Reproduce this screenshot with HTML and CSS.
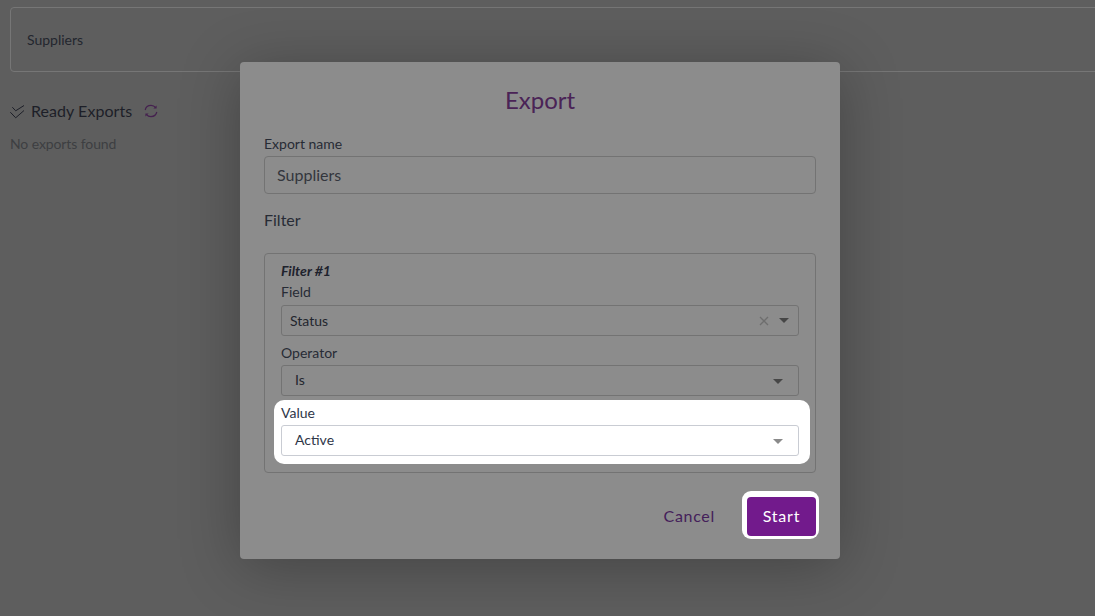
FILE: index.html
```html
<!DOCTYPE html>
<html lang="en">
<head>
<meta charset="utf-8">
<title>Export</title>
<link rel="stylesheet" href="styles.css">
</head>
<body>
<main class="page">
  <section class="entity-card">Suppliers</section>
  <h2 class="ready-title">
    <svg class="check-icon" width="16" height="14" viewBox="0 0 16 14" fill="none"><path d="M2.300 2.200 5.700 5.800 14 .5M.3 7.200 5.700 12.800 14 5.500" stroke="#1d1f28" stroke-width="1"/></svg>
    <span>Ready Exports</span>
    <svg class="refresh-icon" width="14" height="14" viewBox="0 0 14 14" fill="none"><path d="M1.200 6C1.800 3.200 4.100 1.400 7 1.400c1.900 0 3.600.9 4.700 2.300M12.800 8c-.6 2.800-2.900 4.600-5.800 4.600-1.900 0-3.600-.9-4.700-2.300" stroke="#45214f" stroke-width="1.200"/><path d="M12.600 1.400v3.200H9.400l3.200-3.200ZM1.400 12.600V9.400h3.200l-3.200 3.200Z" fill="#45214f"/></svg>
  </h2>
  <p class="empty">No exports found</p>
</main>
<div class="overlay">
  <div class="modal">
    <h1 class="modal-title">Export</h1>
    <label class="label">Export name</label>
    <div class="text-input">Suppliers</div>
    <h3 class="filter-heading">Filter</h3>
    <fieldset class="filter-box">
      <div class="filter-name">Filter #1</div>
      <div class="field-block first">
        <label class="label small">Field</label>
        <div class="select select-field">
          <span class="select-value">Status</span>
          <svg class="clear-icon" width="10" height="10" viewBox="0 0 10 10" fill="none"><path d="M1 1l8 8M9 1 1 9" stroke="#6e6e6e" stroke-width="1.300"/></svg>
          <i class="caret"></i>
        </div>
      </div>
      <div class="field-block">
        <label class="label small">Operator</label>
        <div class="select"><span class="select-value inset">Is</span><i class="caret low"></i></div>
      </div>
      <div class="field-block spotlight">
        <label class="label small">Value</label>
        <div class="select light"><span class="select-value inset">Active</span><i class="caret low"></i></div>
      </div>
    </fieldset>
    <div class="actions">
      <button class="btn-cancel">Cancel</button>
      <div class="start-spotlight"><button class="btn-start">Start</button></div>
    </div>
  </div>
</div>
</body>
</html>
```
FILE: styles.css
```css
* { box-sizing: border-box; }
html, body { margin: 0; height: 100%; }
body {
  width: 1095px;
  height: 616px;
  overflow: hidden;
  background: #5e5e5e;
  font-family: Lato, "Liberation Sans", sans-serif;
  color: #1e222c;
  position: relative;
}
.page { padding: 7px 0 0 10px; }
.entity-card {
  width: 1100px;
  height: 65px;
  border: 1px solid #767676;
  border-radius: 4px;
  padding: 0 16px;
  display: flex;
  align-items: center;
  font-size: 14px;
  color: #23262e;
}
.ready-title {
  margin: 28px 0 0;
  display: flex;
  align-items: center;
  height: 20px;
  font-size: 16px;
  font-weight: 400;
  letter-spacing: 0.05px;
  color: #1d1f28;
}
.check-icon { margin: 3px 5px 0 0; }
.refresh-icon { margin: 2px 0 0 12px; }
.empty { margin: 15px 0 0; font-size: 14px; line-height: 17px; letter-spacing: -0.1px; color: #3d3f42; }
.overlay {
  position: absolute;
  inset: 0;
  display: flex;
  justify-content: center;
  align-items: flex-start;
  padding: 62px 15px 0 0;
}
.modal {
  width: 600px;
  height: 497px;
  background: #8c8c8c;
  border-radius: 4px;
  box-shadow: 0 8px 60px rgba(0, 0, 0, 0.28);
  padding: 23px 24px 0;
}
.modal-title {
  margin: 0;
  height: 30px;
  line-height: 30px;
  text-align: center;
  font-size: 24px;
  font-weight: 400;
  color: #4a2356;
}
.label { display: block; font-size: 14px; line-height: 17px; color: #272b35; }
.modal-title + .label { margin-top: 20px; }
.text-input {
  margin-top: 4px;
  height: 38px;
  border: 1px solid #737373;
  border-radius: 4px;
  padding: 0 12px 2px;
  display: flex;
  align-items: center;
  font-size: 16px;
  color: #33363d;
}
.filter-heading {
  margin: 16px 0 0;
  height: 20px;
  line-height: 20px;
  font-size: 16px;
  font-weight: 400;
  color: #272b35;
}
.filter-box {
  margin: 23px 0 0;
  padding: 8px 16px 0;
  height: 220px;
  border: 1px solid #737373;
  border-radius: 4px;
  min-width: 0;
}
.filter-name { font-size: 14px; line-height: 17px; font-style: italic; font-weight: 700; color: #1e222c; margin-bottom: 4px; }
.field-block { margin-bottom: 8px; }
.field-block .label { margin-bottom: 4px; }
.field-block.first .label { margin-bottom: 5px; }
.select {
  height: 31px;
  border: 1px solid #737373;
  border-radius: 3px;
  display: flex;
  align-items: center;
  padding: 0 15px 0 8px;
  font-size: 14px;
  color: #23262e;
}
.select-field { padding: 0 9px 0 8px; }
.select-value { flex: 1; }
.select-value.inset { padding: 0 0 2px 5px; }
.clear-icon { margin-right: 10px; }
.caret {
  width: 0;
  height: 0;
  border-left: 5px solid transparent;
  border-right: 5px solid transparent;
  border-top: 5px solid #464646;
}
.caret.low { margin-top: 2px; }
.field-block.spotlight {
  position: relative;
  margin: -4px -11px 0 -7px;
  padding: 4px 11px 8px 7px;
  background: #fff;
  border-radius: 10px;
  height: 64px;
}
.field-block.spotlight .label { color: #2e3648; margin-bottom: 4px; }
.select.light { border-color: #c9ccd3; color: #2e3648; }
.select.light .caret { border-top-color: #8a8a8a; }
.actions {
  margin-top: 18px;
  display: flex;
  justify-content: flex-end;
  align-items: center;
}
.btn-cancel {
  background: none;
  border: 0;
  padding: 0;
  margin: 0 27px 0 0;
  font: 400 16px Lato, "Liberation Sans", sans-serif;
  letter-spacing: 0.7px;
  color: #44205a;
}
.start-spotlight {
  padding: 6px 3px 3px 5px;
  margin-right: -3px;
  background: #fff;
  border-radius: 9px;
  display: flex;
}
.btn-start {
  width: 69px;
  height: 39px;
  padding: 0 0 2px;
  background: #721a8c;
  border: 0;
  border-radius: 4px;
  font: 400 16px Lato, "Liberation Sans", sans-serif;
  letter-spacing: 0.8px;
  color: #fff;
}
```
